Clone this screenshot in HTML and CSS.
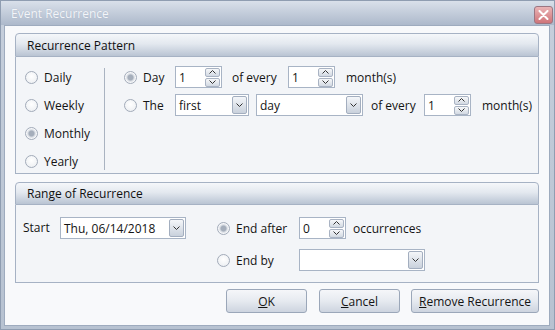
FILE: index.html
```html
<!DOCTYPE html>
<html lang="en">
<head>
    <meta charset="UTF-8">
    <title>Event Recurrence</title>
    <link rel="stylesheet" href="styles.css">
</head>
<body>
    <div class="window">
        <div class="titlebar">
            <span class="title">Event Recurrence</span>
            <span class="close-btn">
                <svg width="11" height="10" viewBox="0 0 11 10"><path d="M1.5 1 L9.5 9 M9.5 1 L1.5 9" stroke="#fff" stroke-width="2" stroke-linecap="round"/></svg>
            </span>
        </div>
        <div class="content">
            <div class="group pattern">
                <div class="group-header">Recurrence Pattern</div>
                <div class="group-body">
                    <div class="freq-col">
                        <label class="radio-row"><span class="radio"></span>Daily</label>
                        <label class="radio-row"><span class="radio"></span>Weekly</label>
                        <label class="radio-row"><span class="radio checked"></span>Monthly</label>
                        <label class="radio-row"><span class="radio"></span>Yearly</label>
                    </div>
                    <div class="detail-col">
                        <div class="row">
                            <label class="radio-row lbl-short"><span class="radio checked"></span>Day</label>
                            <div class="spin"><span class="val">1</span><span class="spin-btns"><span class="spin-btn"><svg width="7" height="4" viewBox="0 0 7 4"><path d="M0.5 3.5 L3.5 0.5 L6.5 3.5" fill="none" stroke="#333" stroke-width="1"/></svg></span><span class="spin-btn"><svg width="7" height="4" viewBox="0 0 7 4"><path d="M0.5 0.5 L3.5 3.5 L6.5 0.5" fill="none" stroke="#333" stroke-width="1"/></svg></span></span></div>
                            <span class="txt every-1">of every</span>
                            <div class="spin"><span class="val">1</span><span class="spin-btns"><span class="spin-btn"><svg width="7" height="4" viewBox="0 0 7 4"><path d="M0.5 3.5 L3.5 0.5 L6.5 3.5" fill="none" stroke="#333" stroke-width="1"/></svg></span><span class="spin-btn"><svg width="7" height="4" viewBox="0 0 7 4"><path d="M0.5 0.5 L3.5 3.5 L6.5 0.5" fill="none" stroke="#333" stroke-width="1"/></svg></span></span></div>
                            <span class="txt months">month(s)</span>
                        </div>
                        <div class="row">
                            <label class="radio-row lbl-short"><span class="radio"></span>The</label>
                            <div class="combo w-first"><span class="val">first</span><span class="drop-btn"><svg width="7" height="4" viewBox="0 0 7 4"><path d="M0.5 0.5 L3.5 3.5 L6.5 0.5" fill="none" stroke="#333" stroke-width="1"/></svg></span></div>
                            <div class="combo w-day"><span class="val">day</span><span class="drop-btn"><svg width="7" height="4" viewBox="0 0 7 4"><path d="M0.5 0.5 L3.5 3.5 L6.5 0.5" fill="none" stroke="#333" stroke-width="1"/></svg></span></div>
                            <span class="txt every-2">of every</span>
                            <div class="spin"><span class="val">1</span><span class="spin-btns"><span class="spin-btn"><svg width="7" height="4" viewBox="0 0 7 4"><path d="M0.5 3.5 L3.5 0.5 L6.5 3.5" fill="none" stroke="#333" stroke-width="1"/></svg></span><span class="spin-btn"><svg width="7" height="4" viewBox="0 0 7 4"><path d="M0.5 0.5 L3.5 3.5 L6.5 0.5" fill="none" stroke="#333" stroke-width="1"/></svg></span></span></div>
                            <span class="txt months">month(s)</span>
                        </div>
                    </div>
                </div>
            </div>

            <div class="group range">
                <div class="group-header">Range of Recurrence</div>
                <div class="group-body">
                    <span class="txt start-lbl">Start</span>
                    <div class="combo w-date"><span class="val">Thu, 06/14/2018</span><span class="drop-btn"><svg width="7" height="4" viewBox="0 0 7 4"><path d="M0.5 0.5 L3.5 3.5 L6.5 0.5" fill="none" stroke="#333" stroke-width="1"/></svg></span></div>
                    <div class="end-col">
                        <div class="row">
                            <label class="radio-row lbl-long"><span class="radio checked"></span>End after</label>
                            <div class="spin"><span class="val">0</span><span class="spin-btns"><span class="spin-btn"><svg width="7" height="4" viewBox="0 0 7 4"><path d="M0.5 3.5 L3.5 0.5 L6.5 3.5" fill="none" stroke="#333" stroke-width="1"/></svg></span><span class="spin-btn"><svg width="7" height="4" viewBox="0 0 7 4"><path d="M0.5 0.5 L3.5 3.5 L6.5 0.5" fill="none" stroke="#333" stroke-width="1"/></svg></span></span></div>
                            <span class="txt occ">occurrences</span>
                        </div>
                        <div class="row">
                            <label class="radio-row lbl-long"><span class="radio"></span>End by</label>
                            <div class="combo w-date"><span class="val"></span><span class="drop-btn"><svg width="7" height="4" viewBox="0 0 7 4"><path d="M0.5 0.5 L3.5 3.5 L6.5 0.5" fill="none" stroke="#333" stroke-width="1"/></svg></span></div>
                        </div>
                    </div>
                </div>
            </div>

            <div class="buttons">
                <button class="btn w-ok"><u>O</u>K</button>
                <button class="btn w-cancel"><u>C</u>ancel</button>
                <button class="btn w-remove"><u>R</u>emove Recurrence</button>
            </div>
        </div>
    </div>
</body>
</html>
```

FILE: styles.css
```css
body {
    margin: 0;
    font-family: "Open Sans", sans-serif;
    font-size: 12px;
    color: #141414;
    background: #ffffff;
}
.window {
    width: 555px;
    height: 330px;
    box-sizing: border-box;
    border: 1px solid #8f9db1;
    background: linear-gradient(#c6cfdc, #b7c2d1);
    display: flex;
    flex-direction: column;
}
.titlebar {
    height: 24px;
    flex: none;
    display: flex;
    align-items: center;
    justify-content: space-between;
    padding: 0 1px 0 10px;
    background: linear-gradient(#d9e0ea, #adb9cb);
}
.title {
    color: #f3f5f9;
    text-shadow: 0 0 1px rgba(120, 135, 160, 0.4);
}
.close-btn {
    width: 19px;
    height: 18px;
    box-sizing: border-box;
    margin-top: 3px;
    border: 1px solid #9c7682;
    border-radius: 3px;
    background: linear-gradient(#eab4b6, #cf7479);
    display: flex;
    align-items: center;
    justify-content: center;
}
.content {
    flex: 1;
    margin: 0 4px 3px 3px;
    border: 1px solid #9eabbe;
    background: #f8f9fb;
    padding: 7px 10px 0 10px;
    display: flex;
    flex-direction: column;
}

/* group boxes */
.group {
    display: flex;
    flex-direction: column;
}
.group-header {
    height: 24px;
    box-sizing: border-box;
    border: 1px solid #a6b2c4;
    border-radius: 4px 4px 0 0;
    background: linear-gradient(#f5f7fa, #e3e8ef 45%, #b9c4d3);
    padding-left: 11px;
    display: flex;
    align-items: center;
    color: #101010;
}
.group-body {
    border: 1px solid #a6b2c4;
    border-top: none;
    background: #f3f5f8;
    display: flex;
    align-items: flex-start;
}
.pattern .group-body {
    height: 117px;
    box-sizing: border-box;
}
.range {
    margin-top: 8px;
}
.range .group-header {
    height: 23px;
}
.range .group-body {
    height: 78px;
    box-sizing: border-box;
    padding: 12px 0 0 7px;
}

/* radios */
.radio-row {
    display: flex;
    align-items: center;
    gap: 6px;
    height: 16px;
}
.radio {
    width: 13px;
    height: 13px;
    box-sizing: border-box;
    border: 1px solid #a2abb9;
    border-radius: 50%;
    background: radial-gradient(circle at 50% 40%, #ffffff, #e9ecf0);
    flex: none;
}
.radio.checked {
    background: radial-gradient(circle, #a5aebb 0, #a5aebb 2.5px, #d4d9e0 3.5px, #f6f7f9 5px);
}

.freq-col {
    width: 89px;
    box-sizing: border-box;
    margin: 11px 0 2px 0;
    padding: 1px 0 1px 9px;
    border-right: 1px solid #a9b3c1;
    display: flex;
    flex-direction: column;
    gap: 12px;
}
.detail-col {
    padding: 9px 0 0 19px;
    display: flex;
    flex-direction: column;
    gap: 6px;
}
.row {
    display: flex;
    align-items: center;
    height: 22px;
}
.lbl-short {
    width: 51px;
}
.lbl-long {
    width: 82px;
}
.txt {
    white-space: nowrap;
}
.every-1 {
    margin-left: 10px;
    width: 56px;
}
.every-2 {
    margin-left: 8px;
    width: 53px;
}
.months {
    margin-left: 11px;
}
.occ {
    margin-left: 7px;
}
.start-lbl {
    width: 37px;
    height: 22px;
    line-height: 22px;
}
.end-col {
    margin-left: 31px;
    display: flex;
    flex-direction: column;
    gap: 10px;
}

/* spin boxes */
.spin, .combo {
    height: 22px;
    box-sizing: border-box;
    border: 1px solid #a8b4c5;
    background: #ffffff;
    display: flex;
    align-items: center;
    justify-content: space-between;
    padding: 0 1px 0 3px;
}
.spin {
    width: 47px;
}
.val {
    white-space: nowrap;
}
.spin-btns {
    display: flex;
    flex-direction: column;
    gap: 1px;
}
.spin-btn {
    width: 15px;
    height: 9px;
    box-sizing: border-box;
    border: 1px solid #a9b3c3;
    border-radius: 2px;
    background: linear-gradient(#f7f8fa, #d2d9e2);
    display: flex;
    align-items: center;
    justify-content: center;
}

/* combos */
.w-first {
    width: 74px;
}
.w-day {
    width: 107px;
    margin-left: 7px;
}
.w-date {
    width: 126px;
}
.drop-btn {
    width: 15px;
    height: 18px;
    box-sizing: border-box;
    border: 1px solid #a3aebf;
    border-radius: 2px;
    background: linear-gradient(#f4f6f9, #c9d1dc);
    display: flex;
    align-items: center;
    justify-content: center;
}

/* buttons */
.buttons {
    margin-top: 6px;
    display: flex;
    justify-content: flex-end;
}
.btn {
    height: 24px;
    font-family: "Open Sans", sans-serif;
    font-size: 12px;
    color: #141414;
    border: 1px solid #9ba7b9;
    border-radius: 3px;
    background: linear-gradient(#f5f6f9, #e6eaf0 50%, #cdd4df);
    padding: 0;
    margin-left: 11px;
}
.w-ok {
    width: 81px;
}
.w-cancel {
    width: 81px;
    margin-left: 12px;
}
.w-remove {
    width: 128px;
}
```
